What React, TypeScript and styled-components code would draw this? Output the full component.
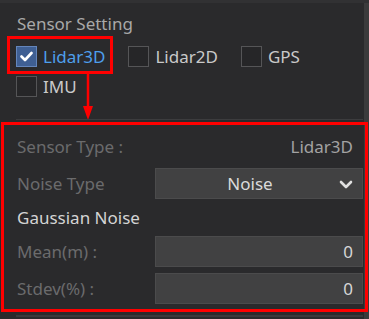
import React from 'react'
import styled, { createGlobalStyle } from 'styled-components'

const GlobalStyle = createGlobalStyle`
  html, body {
    margin: 0;
    padding: 0;
    background: #2a2a2c;
  }
  * {
    box-sizing: border-box;
  }
`

const Frame = styled.div`
  width: 369px;
  height: 319px;
  display: flex;
  background: #2a2a2c;
  border-top: 3px solid #313133;
  overflow: hidden;
  font-family: 'Noto Sans', 'Open Sans', sans-serif;
  font-size: 17px;
`

const Content = styled.div`
  flex: 1;
  padding: 10px 1px 0 16px;
  position: relative;
`

const ScrollTrack = styled.div`
  width: 5px;
  background: #3b3b3c;
`

const Title = styled.div`
  color: #a8a8a8;
  line-height: 22px;
  padding-left: 1px;
`

const CheckGroup = styled.div`
  display: flex;
  flex-wrap: wrap;
  column-gap: 23px;
  row-gap: 9px;
  margin-top: 11px;
`

const CheckItem = styled.label<{ $highlight?: boolean }>`
  position: relative;
  display: flex;
  align-items: center;
  gap: 6px;
  height: 21px;
  cursor: pointer;

  ${({ $highlight }) =>
    $highlight &&
    `
    &::after {
      content: '';
      position: absolute;
      top: -10px;
      left: -9px;
      right: -8px;
      bottom: -7px;
      border: 3px solid #ff0000;
    }
  `}
`

const Box = styled.span<{ $checked?: boolean }>`
  width: 21px;
  height: 21px;
  display: flex;
  align-items: center;
  justify-content: center;
  border: 1px solid ${({ $checked }) => ($checked ? '#6485bb' : '#555557')};
  background: ${({ $checked }) => ($checked ? '#3f5f93' : '#262628')};
`

const CheckLabel = styled.span<{ $checked?: boolean }>`
  color: ${({ $checked }) => ($checked ? '#4e9fec' : '#c9c9c9')};
  line-height: 21px;
`

const Arrow = styled.svg`
  position: absolute;
  left: 82px;
  top: 70px;
`

const Panel = styled.div`
  position: relative;
  margin-top: 22px;
  border-top: 1px solid #3c3c3e;
  border-bottom: 2px solid #3a3a3c;
  padding: 11px 0 11px 1px;
  display: grid;
  grid-template-columns: 138px 1fr;
  row-gap: 6px;

  &::after {
    content: '';
    position: absolute;
    top: 2px;
    left: -15px;
    right: -5px;
    bottom: 3px;
    border: 3px solid #ff0000;
    pointer-events: none;
  }
`

const FieldLabel = styled.div<{ $strong?: boolean; $short?: boolean }>`
  display: flex;
  align-items: center;
  height: ${({ $short }) => ($short ? '25px' : '31px')};
  color: ${({ $strong }) => ($strong ? '#d4d4d4' : '#6b6b6c')};
  white-space: nowrap;
  grid-column: ${({ $strong }) => ($strong ? '1 / 3' : 'auto')};
`

const StaticValue = styled.div`
  display: flex;
  align-items: center;
  justify-content: flex-end;
  height: 31px;
  padding-right: 10px;
  color: #a3a3a3;
`

const Select = styled.div`
  position: relative;
  height: 31px;
  display: flex;
  align-items: center;
  justify-content: center;
  padding-right: 18px;
  background: #414142;
  border: 1px solid #4b4b4c;
  color: #dadada;
`

const Chevron = styled.svg`
  position: absolute;
  right: 9px;
  top: 11px;
`

const NumberField = styled.div`
  height: 31px;
  display: flex;
  align-items: center;
  justify-content: flex-end;
  padding-right: 9px;
  background: #414142;
  border: 1px solid #4b4b4c;
  color: #d6d6d6;
`

const CheckMark = () => (
  <svg width="13" height="11" viewBox="0 0 13 11">
    <polyline
      points="1.5,5.5 5,9 11.5,2"
      fill="none"
      stroke="#ffffff"
      strokeWidth="2.6"
      strokeLinecap="round"
      strokeLinejoin="round"
    />
  </svg>
)

const sensors = [
  { name: 'Lidar3D', checked: true },
  { name: 'Lidar2D', checked: false },
  { name: 'GPS', checked: false },
  { name: 'IMU', checked: false },
]

const App: React.FC = () => {
  return (
    <>
      <GlobalStyle />
      <Frame>
        <Content>
          <Title>Sensor Setting</Title>
          <CheckGroup>
            {sensors.map((s) => (
              <CheckItem key={s.name} $highlight={s.checked}>
                <Box $checked={s.checked}>{s.checked && <CheckMark />}</Box>
                <CheckLabel $checked={s.checked}>{s.name}</CheckLabel>
              </CheckItem>
            ))}
          </CheckGroup>

          <Arrow width="12" height="48" viewBox="0 0 12 48">
            <line x1="6" y1="0" x2="6" y2="36" stroke="#ff0000" strokeWidth="2.5" />
            <polygon points="1,33 11,33 6,47" fill="#ff0000" />
          </Arrow>

          <Panel>
            <FieldLabel>Sensor Type :</FieldLabel>
            <StaticValue>Lidar3D</StaticValue>

            <FieldLabel>Noise Type</FieldLabel>
            <Select>
              Noise
              <Chevron width="14" height="9" viewBox="0 0 14 9">
                <polyline
                  points="2,2 7,7 12,2"
                  fill="none"
                  stroke="#e0e0e0"
                  strokeWidth="2.6"
                  strokeLinecap="round"
                  strokeLinejoin="round"
                />
              </Chevron>
            </Select>

            <FieldLabel $strong $short>
              Gaussian Noise
            </FieldLabel>

            <FieldLabel>Mean(m) :</FieldLabel>
            <NumberField>0</NumberField>

            <FieldLabel>Stdev(%) :</FieldLabel>
            <NumberField>0</NumberField>
          </Panel>
        </Content>
        <ScrollTrack />
      </Frame>
    </>
  )
}

export default App
